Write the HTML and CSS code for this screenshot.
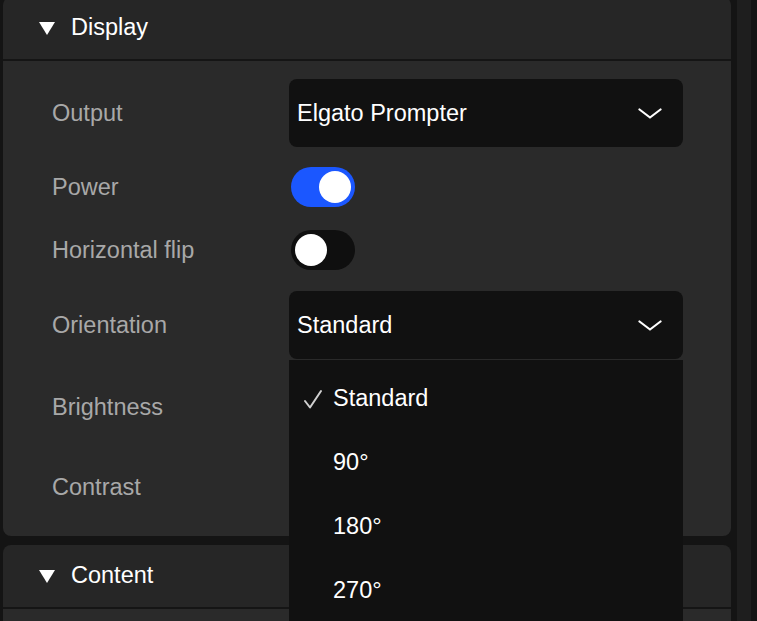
FILE: index.html
```html
<!DOCTYPE html>
<html lang="en">
<head>
<meta charset="utf-8">
<title>Display settings</title>
<link rel="stylesheet" href="styles.css">
</head>
<body>
<div class="page">
  <div class="main">
    <section class="card card-first">
      <div class="card-header">
        <svg class="caret" width="16" height="14" viewBox="0 0 16 14"><polygon points="0,0 16,0 8,13" fill="#fff"/></svg>
        <span class="card-title">Display</span>
      </div>
      <div class="card-body">
        <div class="row row-output">
          <div class="label">Output</div>
          <div class="control">
            <div class="select">
              <span class="select-value">Elgato Prompter</span>
              <svg class="chevron" width="24" height="12" viewBox="0 0 24 12"><polyline points="1.5,1.5 12,9.5 22.5,1.5" fill="none" stroke="#fff" stroke-width="2.2" stroke-linecap="round" stroke-linejoin="round"/></svg>
            </div>
          </div>
        </div>
        <div class="row row-power">
          <div class="label">Power</div>
          <div class="control">
            <div class="toggle toggle-on"><span class="knob"></span></div>
          </div>
        </div>
        <div class="row row-flip">
          <div class="label">Horizontal flip</div>
          <div class="control">
            <div class="toggle toggle-off"><span class="knob"></span></div>
          </div>
        </div>
        <div class="row row-orient">
          <div class="label">Orientation</div>
          <div class="control">
            <div class="select-wrap">
              <div class="select select-open">
                <span class="select-value">Standard</span>
                <svg class="chevron" width="24" height="12" viewBox="0 0 24 12"><polyline points="1.5,1.5 12,9.5 22.5,1.5" fill="none" stroke="#fff" stroke-width="2.2" stroke-linecap="round" stroke-linejoin="round"/></svg>
              </div>
              <ul class="menu">
                <li class="option option-selected">
                  <svg class="check" width="22" height="22" viewBox="0 0 22 22"><polyline points="3,13 8,19.5 19,3" fill="none" stroke="#d0d0d0" stroke-width="2" stroke-linecap="round" stroke-linejoin="round"/></svg>
                  <span>Standard</span>
                </li>
                <li class="option"><span>90°</span></li>
                <li class="option"><span>180°</span></li>
                <li class="option"><span>270°</span></li>
              </ul>
            </div>
          </div>
        </div>
        <div class="row row-bright">
          <div class="label">Brightness</div>
          <div class="control"><div class="slider"><span class="slider-fill"></span></div></div>
        </div>
        <div class="row row-contrast">
          <div class="label">Contrast</div>
          <div class="control"><div class="slider"><span class="slider-fill"></span></div></div>
        </div>
      </div>
    </section>
    <section class="card card-second">
      <div class="card-header">
        <svg class="caret" width="16" height="14" viewBox="0 0 16 14"><polygon points="0,0 16,0 8,13" fill="#fff"/></svg>
        <span class="card-title">Content</span>
      </div>
      <div class="card-body card-body-rest"></div>
    </section>
  </div>
  <div class="scroll-track"></div>
</div>
</body>
</html>
```
FILE: styles.css
```css
* { box-sizing: border-box; }
html, body {
  margin: 0;
  padding: 0;
  background: #141414;
  height: 100%;
  overflow: hidden;
}
body {
  font-family: "Liberation Sans", Arial, sans-serif;
  font-size: 23.5px;
  color: #fff;
}
.page {
  display: flex;
  height: 621px;
  padding-left: 3px;
  overflow: hidden;
}
.main {
  width: 728px;
  flex: none;
  display: flex;
  flex-direction: column;
  gap: 9px;
  margin-top: -3px;
}
.scroll-track {
  width: 14px;
  margin-left: 6px;
  background: #1e1e1e;
  flex: none;
}
.card {
  border-radius: 8px;
  flex: none;
}
.card-header {
  height: 62px;
  background: #262626;
  border-radius: 8px 8px 0 0;
  display: flex;
  align-items: center;
  padding-left: 36px;
  border-bottom: 2px solid #151515;
  box-sizing: content-box;
}
.caret { flex: none; margin-top: 1px; }
.card-title {
  margin-left: 16px;
  line-height: 1;
}
.card-body {
  background: #2a2a2a;
  border-radius: 0 0 8px 8px;
  padding: 18px 48px 29px 49px;
}
.card-body-rest {
  height: 12px;
  padding: 0;
  border-radius: 0;
}
.row {
  display: flex;
  align-items: center;
}
.label {
  width: 237px;
  flex: none;
  color: #a8a8a8;
}
.control {
  width: 394px;
  flex: none;
}
.row-output { height: 68px; }
.row-power { height: 40px; margin-top: 20px; }
.row-flip { height: 40px; margin-top: 23px; }
.row-orient { height: 68px; margin-top: 21px; }
.row-bright { height: 40px; margin-top: 28px; }
.row-contrast { height: 40px; margin-top: 40px; }

.select {
  height: 68px;
  background: #111111;
  border-radius: 8px;
  display: flex;
  align-items: center;
  justify-content: space-between;
  padding: 0 21px 0 8px;
}
.chevron { flex: none; margin-top: 1px; }
.select-wrap {
  position: relative;
}
.menu {
  position: absolute;
  left: 0;
  top: 69px;
  width: 100%;
  margin: 0;
  padding: 6px 0 0 0;
  list-style: none;
  background: #111111;
  z-index: 10;
  height: 262px;
  overflow: hidden;
}
.option {
  height: 64px;
  display: flex;
  align-items: center;
  padding-left: 44px;
  color: #fff;
}
.option-selected {
  padding-left: 13px;
}
.check {
  flex: none;
  margin-right: 9px;
  margin-top: 1px;
}
.toggle {
  width: 64px;
  height: 40px;
  border-radius: 20px;
  padding: 4px;
  display: flex;
  margin-left: 2px;
}
.toggle-on {
  background: #1b57ff;
  justify-content: flex-end;
}
.toggle-off {
  background: #0f0f0f;
  justify-content: flex-start;
}
.knob {
  width: 32px;
  height: 32px;
  border-radius: 50%;
  background: #fff;
}
.slider {
  height: 6px;
  border-radius: 3px;
  background: #111;
}
.slider-fill {
  display: block;
  width: 50%;
  height: 100%;
  border-radius: 3px;
  background: #1b57ff;
}
```
